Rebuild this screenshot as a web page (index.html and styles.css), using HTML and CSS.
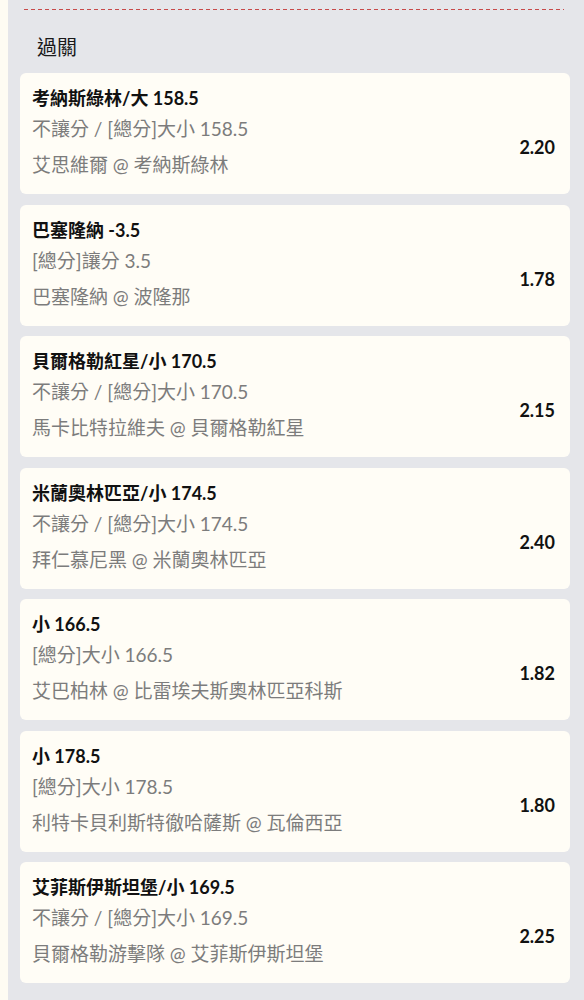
FILE: index.html
```html
<!DOCTYPE html>
<html lang="zh-Hant">
<head>
<meta charset="utf-8">
<link rel="stylesheet" href="styles.css">
</head>
<body>
<div class="panel">
  <div class="ticket-edge"></div>
  <h2 class="section-title">過關</h2>
  <div class="list">
    <div class="card">
      <div class="card-title">考納斯綠林/大 158.5</div>
      <div class="card-row">
        <div class="card-info">
          <div class="market">不讓分 / [總分]大小 158.5</div>
          <div class="match">艾思維爾 @ 考納斯綠林</div>
        </div>
        <div class="odds">2.20</div>
      </div>
    </div>
    <div class="card">
      <div class="card-title">巴塞隆納 -3.5</div>
      <div class="card-row">
        <div class="card-info">
          <div class="market">[總分]讓分 3.5</div>
          <div class="match">巴塞隆納 @ 波隆那</div>
        </div>
        <div class="odds">1.78</div>
      </div>
    </div>
    <div class="card">
      <div class="card-title">貝爾格勒紅星/小 170.5</div>
      <div class="card-row">
        <div class="card-info">
          <div class="market">不讓分 / [總分]大小 170.5</div>
          <div class="match">馬卡比特拉維夫 @ 貝爾格勒紅星</div>
        </div>
        <div class="odds">2.15</div>
      </div>
    </div>
    <div class="card">
      <div class="card-title">米蘭奧林匹亞/小 174.5</div>
      <div class="card-row">
        <div class="card-info">
          <div class="market">不讓分 / [總分]大小 174.5</div>
          <div class="match">拜仁慕尼黑 @ 米蘭奧林匹亞</div>
        </div>
        <div class="odds">2.40</div>
      </div>
    </div>
    <div class="card">
      <div class="card-title">小 166.5</div>
      <div class="card-row">
        <div class="card-info">
          <div class="market">[總分]大小 166.5</div>
          <div class="match">艾巴柏林 @ 比雷埃夫斯奧林匹亞科斯</div>
        </div>
        <div class="odds">1.82</div>
      </div>
    </div>
    <div class="card">
      <div class="card-title">小 178.5</div>
      <div class="card-row">
        <div class="card-info">
          <div class="market">[總分]大小 178.5</div>
          <div class="match">利特卡貝利斯特徹哈薩斯 @ 瓦倫西亞</div>
        </div>
        <div class="odds">1.80</div>
      </div>
    </div>
    <div class="card">
      <div class="card-title">艾菲斯伊斯坦堡/小 169.5</div>
      <div class="card-row">
        <div class="card-info">
          <div class="market">不讓分 / [總分]大小 169.5</div>
          <div class="match">貝爾格勒游擊隊 @ 艾菲斯伊斯坦堡</div>
        </div>
        <div class="odds">2.25</div>
      </div>
    </div>
  </div>
</div>
</body>
</html>
```
FILE: styles.css
```css
html, body {
  margin: 0;
  padding: 0;
  background: #fefcf3;
  font-family: "Lato", "Noto Sans CJK TC", sans-serif;
  color: #111;
}
.panel {
  margin-left: 8px;
  background: #e5e6ea;
  padding: 7px 14px 20px 12px;
  min-height: 1000px;
  box-sizing: border-box;
}
.ticket-edge {
  height: 3px;
  margin: 0 6px 0 4px;
  background: repeating-linear-gradient(90deg, #c84a4a 0 4px, transparent 4px 7px) left bottom / 100% 1px no-repeat;
}
.section-title {
  margin: 0;
  padding: 24px 0 0 17px;
  height: 63px;
  box-sizing: border-box;
  font-size: 20px;
  font-weight: 400;
  line-height: 26px;
  color: #1a1a1a;
}
.list {
  display: flex;
  flex-direction: column;
  gap: 10.5px;
}
.card {
  background: #fffdf6;
  border-radius: 6px;
  padding: 13px 15px 16px 12px;
}
.card-title {
  font-size: 18px;
  font-weight: 700;
  line-height: 24px;
  color: #111;
}
.card-row {
  display: flex;
  align-items: center;
  justify-content: space-between;
  margin-top: 6px;
}
.card-info {
  display: flex;
  flex-direction: column;
  gap: 10px;
}
.market, .match {
  font-size: 19px;
  line-height: 26px;
  color: #7c7c7c;
}
.odds {
  font-size: 18px;
  font-weight: 700;
  color: #111;
}
```
